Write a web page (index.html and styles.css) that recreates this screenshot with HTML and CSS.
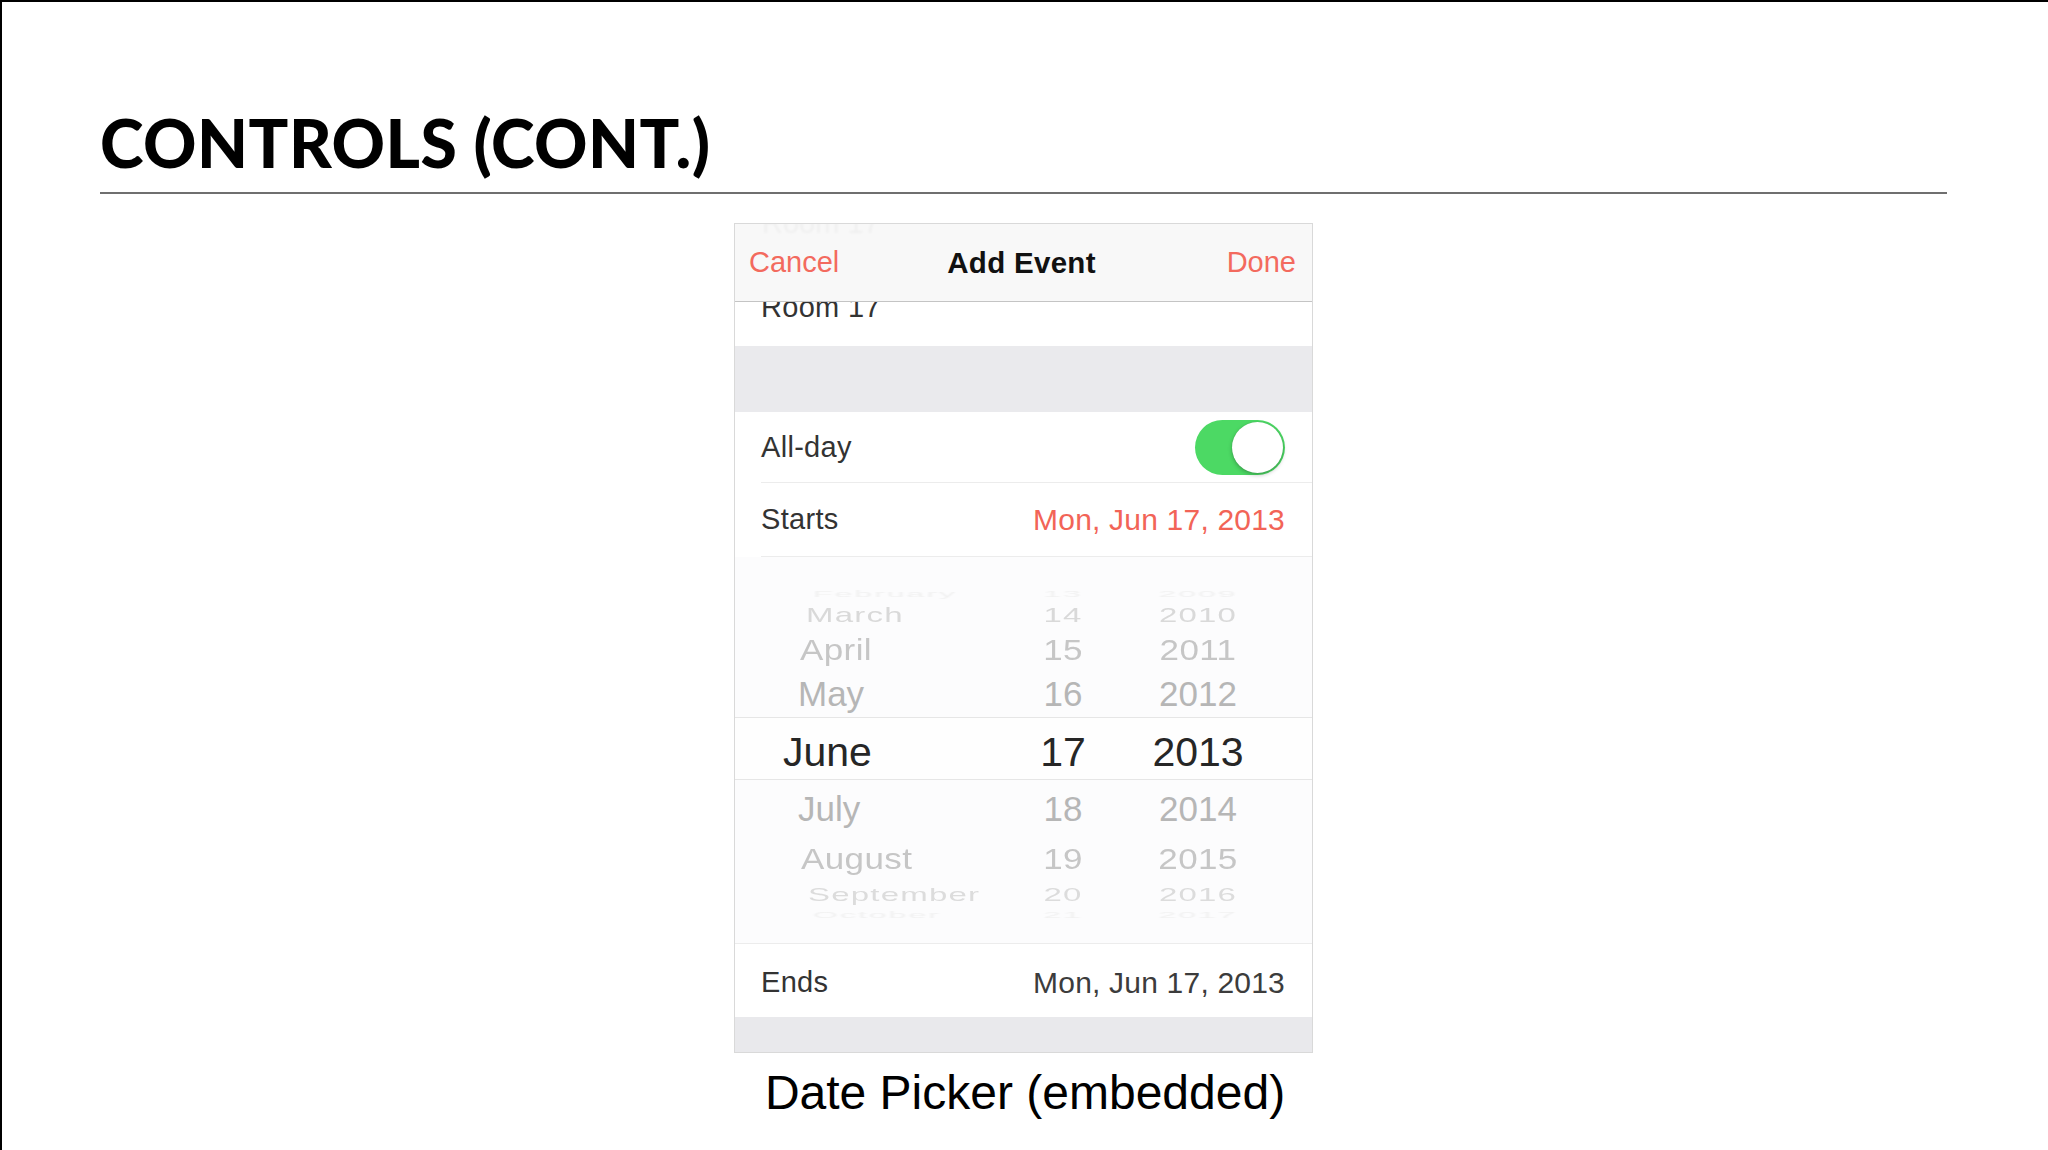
FILE: index.html
```html
<!DOCTYPE html>
<html lang="en">
<head>
<meta charset="utf-8">
<title>Controls (cont.)</title>
<link rel="stylesheet" href="styles.css">
</head>
<body>
<div class="slide">
  <header class="slide-head">
    <h1 class="slide-title">CONTROLS (CONT.)</h1>
    <div class="slide-rule"></div>
  </header>

  <main class="slide-body">
    <div class="phone">
      <div class="nav">
        <span class="nav-ghost">Room 17</span>
        <span class="nav-btn nav-left">Cancel</span>
        <span class="nav-title">Add Event</span>
        <span class="nav-btn nav-right">Done</span>
      </div>

      <div class="room-row"><span class="room-text">Room 17</span></div>

      <div class="gap-section"></div>

      <div class="cell cell-allday">
        <div class="cell-inner">
          <span class="cell-label">All-day</span>
          <span class="toggle"><span class="knob"></span></span>
        </div>
      </div>

      <div class="cell cell-starts">
        <div class="cell-inner">
          <span class="cell-label">Starts</span>
          <span class="cell-value accent">Mon, Jun 17, 2013</span>
        </div>
      </div>

      <div class="picker">
        <div class="picker-inner">
          <div class="wheel-row r-feb"><span class="m">February</span><span class="d">13</span><span class="y">2009</span></div>
          <div class="wheel-row r-mar"><span class="m">March</span><span class="d">14</span><span class="y">2010</span></div>
          <div class="wheel-row r-apr"><span class="m">April</span><span class="d">15</span><span class="y">2011</span></div>
          <div class="wheel-row r-may"><span class="m">May</span><span class="d">16</span><span class="y">2012</span></div>
          <div class="wheel-row r-jun"><span class="m">June</span><span class="d">17</span><span class="y">2013</span></div>
          <div class="wheel-row r-jul"><span class="m">July</span><span class="d">18</span><span class="y">2014</span></div>
          <div class="wheel-row r-aug"><span class="m">August</span><span class="d">19</span><span class="y">2015</span></div>
          <div class="wheel-row r-sep"><span class="m">September</span><span class="d">20</span><span class="y">2016</span></div>
          <div class="wheel-row r-oct"><span class="m">October</span><span class="d">21</span><span class="y">2017</span></div>
        </div>
      </div>

      <div class="cell cell-ends">
        <div class="cell-inner">
          <span class="cell-label">Ends</span>
          <span class="cell-value">Mon, Jun 17, 2013</span>
        </div>
      </div>

      <div class="bottom-section"></div>
    </div>

    <p class="caption">Date Picker (embedded)</p>
  </main>
</div>
</body>
</html>
```

FILE: styles.css
```css
html, body {
  margin: 0;
  padding: 0;
  background: #ffffff;
}

.slide {
  width: 2048px;
  height: 1150px;
  box-sizing: border-box;
  border-top: 2px solid #000;
  border-left: 2px solid #000;
  background: #fff;
  overflow: hidden;
  font-family: "Liberation Sans", Arial, sans-serif;
}

.slide-head {
  padding: 108px 101px 0 98px;
}

.slide-title {
  margin: 0;
  font-family: Lato, "Noto Sans", sans-serif;
  font-weight: 900;
  font-size: 66px;
  line-height: 66px;
  color: #000;
  letter-spacing: 0.5px;
}

.slide-rule {
  margin-top: 16px;
  height: 2px;
  background: #6f6f6f;
}

.slide-body {
  display: flex;
  flex-direction: column;
  align-items: center;
  padding-top: 29px;
}

/* ---------- phone ---------- */
.phone {
  width: 579px;
  box-sizing: border-box;
  border: 1px solid #d9d9d9;
  background: #fff;
  color: #333;
  margin-right: 3px;
}

.nav {
  position: relative;
  overflow: hidden;
  height: 78px;
  box-sizing: border-box;
  border-bottom: 1px solid #c4c4c4;
  background: #f8f8f8;
  display: grid;
  grid-template-columns: 1fr auto 1fr;
  align-items: center;
  padding: 0 16px 0 14px;
  font-size: 29px;
}

.nav-ghost {
  position: absolute;
  left: 27px;
  top: -17px;
  font-size: 29px;
  color: rgba(0, 0, 0, 0.035);
  filter: blur(1.2px);
}

.nav-btn {
  color: #f36a5e;
}

.nav-left { justify-self: start; }
.nav-right { justify-self: end; }

.nav-title {
  font-weight: 700;
  color: #111;
  font-size: 29.5px;
  letter-spacing: 0.3px;
  margin-left: -2px;
}

.room-row {
  height: 44px;
  overflow: hidden;
  padding-left: 26px;
  background: #fff;
}

.room-text {
  display: block;
  font-size: 29px;
  line-height: 10px;
  color: #333;
  letter-spacing: 0.3px;
}

.gap-section {
  height: 66px;
  background: #eaeaed;
}

.cell {
  padding-left: 26px;
  background: #fff;
}

.cell-inner {
  box-sizing: border-box;
  display: flex;
  align-items: center;
  justify-content: space-between;
  padding-right: 27px;
  border-bottom: 1px solid #ececec;
}

.cell-allday .cell-inner { height: 71px; }
.cell-starts .cell-inner { height: 74px; }
.cell-ends .cell-inner { height: 73px; border-bottom: none; padding-top: 4px; }

.cell-label {
  font-size: 29px;
  letter-spacing: 0.3px;
  color: #333;
}

.cell-value {
  font-size: 30px;
  letter-spacing: 0.2px;
  color: #3c3c3c;
}

.cell-value.accent {
  color: #f26457;
}

/* toggle */
.toggle {
  position: relative;
  width: 90px;
  height: 55px;
  border-radius: 28px;
  background: #4cd964;
  display: flex;
  align-items: center;
  justify-content: flex-end;
  padding: 0 2px;
  box-sizing: border-box;
}

.knob {
  width: 51px;
  height: 51px;
  border-radius: 50%;
  background: #fff;
  box-shadow: 0 2px 4px rgba(0, 0, 0, 0.25), 0 0 1px rgba(0, 0, 0, 0.2);
}

/* ---------- picker ---------- */
.picker {
  padding-left: 26px;
  background: #fcfcfd;
}

.picker-inner {
  height: 387px;
  box-sizing: border-box;
  border-bottom: 1px solid #ececec;
  margin-left: -26px;
  padding-top: 27px;
  display: flex;
  flex-direction: column;
}

.wheel-row {
  display: grid;
  grid-template-columns: 298px 60px 45px 120px;
  align-items: center;
  box-sizing: border-box;
  font-size: 35px;
  line-height: 1;
  color: #b8b8b8;
  white-space: nowrap;
  overflow: visible;
}

.wheel-row .m { padding-left: 63px; }
.wheel-row .d { text-align: center; grid-column: 2; }
.wheel-row .y { text-align: center; grid-column: 4; }

.r-feb { height: 15px; font-size: 32px; color: #f1f1f1; transform: scaleY(0.28); filter: blur(0.8px); letter-spacing: 2px; }
.r-feb .m { padding-left: 78px; }

.r-mar { height: 29px; font-size: 33px; color: #d9d9d9; transform: scaleY(0.62); filter: blur(0.5px); letter-spacing: 1.2px; }
.r-mar .m { padding-left: 71px; }

.r-apr { height: 42px; font-size: 35px; color: #c6c6c6; transform: scaleY(0.82); filter: blur(0.3px); letter-spacing: 0.4px; }
.r-apr .m { padding-left: 65px; }

.r-may { height: 47px; font-size: 35px; color: #b6b6b6; }
.r-may .m { padding-left: 63px; }

.r-jun {
  height: 63px;
  padding-top: 8px;
  font-size: 41px;
  color: #262626;
  border-top: 1px solid #e6e6e6;
  border-bottom: 1px solid #e6e6e6;
  background: #fefefe;
}
.r-jun .m { padding-left: 48px; }

.r-jul { height: 57px; font-size: 35px; color: #b6b6b6; }
.r-jul .m { padding-left: 63px; }

.r-aug { height: 42px; font-size: 35px; color: #c6c6c6; transform: scaleY(0.82); filter: blur(0.3px); letter-spacing: 0.4px; }
.r-aug .m { padding-left: 66px; }

.r-sep { height: 26px; font-size: 33px; color: #dcdcdc; transform: scaleY(0.58); filter: blur(0.5px); letter-spacing: 1.2px; }
.r-sep .m { padding-left: 73px; }

.r-oct { height: 14px; font-size: 32px; color: #f1f1f1; transform: scaleY(0.28); filter: blur(0.8px); letter-spacing: 2px; }
.r-oct .m { padding-left: 78px; }

.bottom-section {
  height: 35px;
  background: #e9e9ec;
}

.caption {
  margin: 13px 0 0 0;
  font-size: 48px;
  line-height: 54px;
  color: #000;
}
```
